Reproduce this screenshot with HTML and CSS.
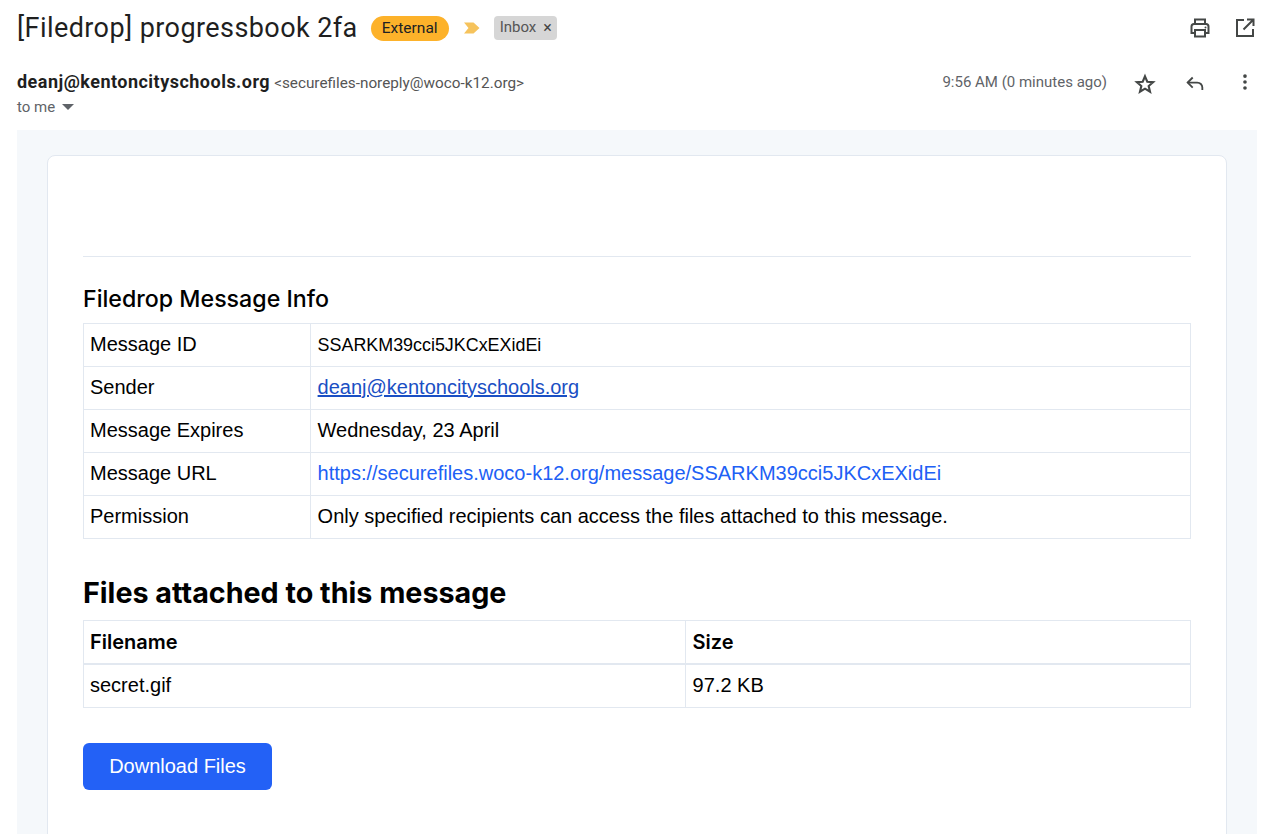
FILE: index.html
```html
<!DOCTYPE html>
<html lang="en">
<head>
<meta charset="utf-8">
<title>[Filedrop] progressbook 2fa</title>
<link rel="stylesheet" href="styles.css">
</head>
<body>
<header class="subject-row">
  <h1 class="subject">[Filedrop] progressbook 2fa</h1>
  <span class="badge-external">External</span>
  <svg class="importance" width="16" height="12" viewBox="0 0 16 12"><path d="M0 0.500h9.500L15.500 6l-6 5.500H0L4.500 6z" fill="#f6c35c"/></svg>
  <span class="badge-inbox">Inbox<span class="badge-x">×</span></span>
  <div class="top-actions">
    <svg class="icon" width="24" height="24" viewBox="0 0 24 24" fill="none" stroke="#444746" stroke-width="2"><path d="M7 8V3.500h10V8"/><path d="M7 17H3.500v-6.500A2.500 2.500 0 0 1 6 8h12a2.500 2.500 0 0 1 2.500 2.500V17H17"/><path d="M7 14h10v6.500H7z"/><circle cx="17.500" cy="11.500" r="1" fill="#444746" stroke="none"/></svg>
    <svg class="icon" width="24" height="24" viewBox="0 0 24 24" fill="none" stroke="#444746" stroke-width="2"><path d="M11 4H4v16h16v-7"/><path d="M14 3.500h6.500V10M20 4l-9.500 9.500"/></svg>
  </div>
</header>
<section class="sender-row">
  <div class="sender-main">
    <div class="sender-line"><strong class="sender-name">deanj@kentoncityschools.org</strong> <span class="sender-addr">&lt;securefiles-noreply@woco-k12.org&gt;</span></div>
    <div class="to-line">to me <svg class="caret" width="12" height="6" viewBox="0 0 12 6"><path d="M0 0h12L6 6z" fill="#5f6368"/></svg></div>
  </div>
  <div class="meta">
    <span class="time">9:56 AM (0 minutes ago)</span>
    <svg class="icon star" width="22" height="22" viewBox="0 0 24 24" fill="none" stroke="#444746" stroke-width="2.300"><path d="M12 3.600l2.500 5.900 6.400.5-4.900 4.200 1.500 6.200L12 17.100l-5.500 3.300L8 14.200 3.100 10l6.400-.5z"/></svg>
    <svg class="icon reply" width="22" height="22" viewBox="0 0 24 24" fill="none" stroke="#444746" stroke-width="2"><path d="M9.500 6L4 11.500 9.500 17"/><path d="M4 11.500h10.500a5.500 5.500 0 0 1 5.500 5.500v2.500"/></svg>
    <svg class="icon more" width="22" height="22" viewBox="0 0 24 24" fill="#444746"><circle cx="12" cy="5.500" r="2"/><circle cx="12" cy="12" r="2"/><circle cx="12" cy="18.500" r="2"/></svg>
  </div>
</section>
<main class="mail-bg">
  <article class="card">
    <hr class="rule">
    <h2 class="h-info">Filedrop Message Info</h2>
    <table class="data info">
      <tr><td class="col-label">Message ID</td><td class="mono-id">SSARKM39cci5JKCxEXidEi</td></tr>
      <tr><td>Sender</td><td><a class="link-dark" href="#">deanj@kentoncityschools.org</a></td></tr>
      <tr><td>Message Expires</td><td>Wednesday, 23 April</td></tr>
      <tr><td>Message URL</td><td><a class="link-bright" href="#">https://securefiles.woco-k12.org/message/SSARKM39cci5JKCxEXidEi</a></td></tr>
      <tr><td>Permission</td><td>Only specified recipients can access the files attached to this message.</td></tr>
    </table>
    <h2 class="h-files">Files attached to this message</h2>
    <table class="data files">
      <tr class="head"><th class="col-file">Filename</th><th>Size</th></tr>
      <tr class="file-row"><td>secret.gif</td><td>97.2 KB</td></tr>
    </table>
    <a class="download" href="#">Download Files</a>
  </article>
</main>
</body>
</html>
```
FILE: styles.css
```css
* { box-sizing: border-box; }
html, body { margin: 0; height: 834px; overflow: hidden; background: #fff; }
body { font-family: Roboto, "Liberation Sans", sans-serif; color: #1f1f1f; padding: 0 6px 0 17px; }

.subject-row { display: flex; align-items: center; height: 56px; }
.subject { margin: 0; font-size: 27px; font-weight: 400; font-family: Roboto, sans-serif; color: #1f1f1f; letter-spacing: 0.42px; white-space: nowrap; }
.badge-external { margin-left: 13px; background: #fdb22a; color: #202124; font-size: 15.500px; height: 25px; line-height: 25px; padding: 0 10px; border-radius: 13px; width: 78px; text-align: center; white-space: nowrap; }
.importance { margin-left: 15px; }
.badge-inbox { margin-left: 14px; background: #d6d6d6; color: #555; font-size: 15px; height: 24px; line-height: 23px; padding: 0 5px 0 6px; border-radius: 4px; width: 63px; display: flex; justify-content: space-between; }
.badge-x { color: #444; font-size: 16px; }
.top-actions { margin-left: auto; display: flex; gap: 21px; }
.icon { display: block; }

.sender-row { display: flex; justify-content: space-between; height: 74px; padding-top: 14px; }
.sender-line { height: 24px; line-height: 24px; display: flex; align-items: baseline; gap: 4px; }
.sender-name { font-size: 18px; font-weight: 700; color: #1f1f1f; letter-spacing: 0.48px; white-space: nowrap; }
.sender-addr { font-size: 15.300px; color: #555; white-space: nowrap; }
.to-line { font-size: 15px; color: #5f6368; margin-top: 3px; display: flex; align-items: center; gap: 7px; line-height: 20px; }
.meta { display: flex; align-items: flex-start; font-size: 15px; color: #5f6368; }
.time { margin-top: 2px; line-height: 20px; white-space: nowrap; }
.star { margin-left: 27px; margin-top: 3px; }
.reply { margin-left: 28px; margin-top: 2px; }
.more { margin-left: 28px; margin-top: 1px; margin-right: 1px; }

.mail-bg { background: #f5f8fb; padding: 25px 30px 0; height: 704px; }
.card { background: #fff; border: 1px solid #e2e8f0; border-radius: 8px; height: 700px; padding: 100px 35px 0; font-family: "Liberation Sans", sans-serif; color: #000; }
.rule { border: 0; border-top: 1px solid #e2e8f0; margin: 0; }
.h-info { font-family: Inter, sans-serif; font-size: 23.200px; font-weight: 500; margin: 28px 0 10px; line-height: 28px; }
.h-files { font-family: Inter, sans-serif; font-size: 28.700px; font-weight: 700; margin: 36px 0 9px; line-height: 36px; }

.data { width: 100%; border-collapse: collapse; table-layout: fixed; font-size: 20px; }
.data td, .data th { border: 1px solid #e2e8f0; padding: 0 6px 2px; height: 43px; text-align: left; font-weight: 400; }
.data td + td, .data th + th { padding-left: 6.600px; }
.col-label { width: 227px; }
.col-file { width: 602px; }
.data td.mono-id { font-size: 17.900px; padding-bottom: 0; }
.data .head th { font-family: Inter, sans-serif; font-size: 20px; font-weight: 600; border-bottom-width: 2px; padding-bottom: 0; }
.data .file-row td { height: 44px; padding-bottom: 0; }
.link-dark { color: #1a4fc4; text-decoration: underline; }
.link-bright { color: #2060f5; text-decoration: none; }

.download { display: block; width: 189px; height: 47px; margin-top: 35px; line-height: 47px; text-align: center; background: #2361f6; color: #fff; border-radius: 6px; font-size: 20px; text-decoration: none; }
```
